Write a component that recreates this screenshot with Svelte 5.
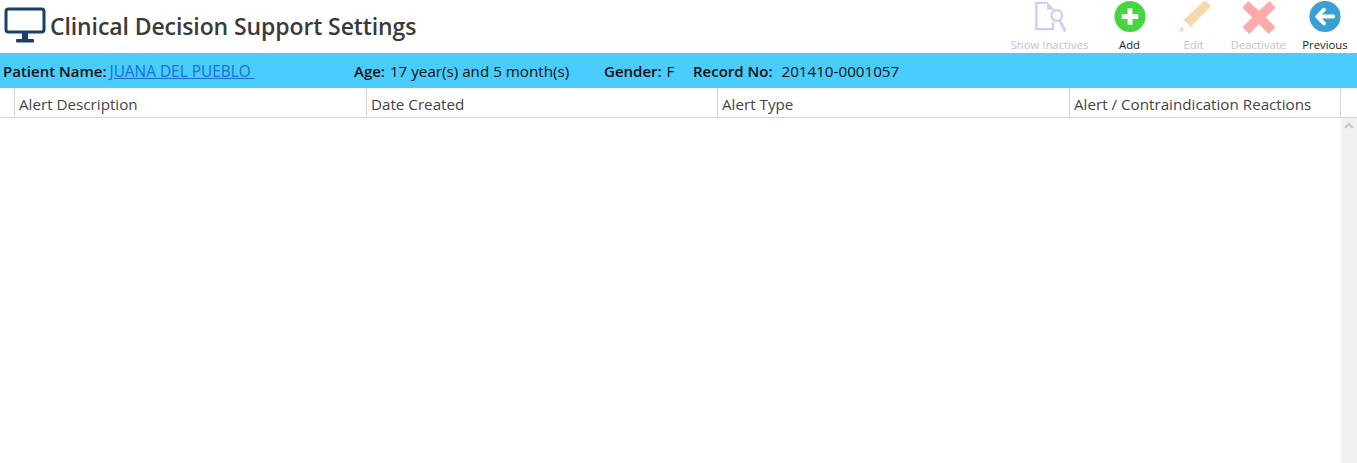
<script>
  const actions = [
    { label: 'Show Inactives', icon: 'search', disabled: true, width: 90 },
    { label: 'Add', icon: 'add', disabled: false, width: 70 },
    { label: 'Edit', icon: 'edit', disabled: true, width: 58 },
    { label: 'Deactivate', icon: 'cross', disabled: true, width: 72 },
    { label: 'Previous', icon: 'back', disabled: false, width: 61 }
  ];

  const columns = ['Alert Description', 'Date Created', 'Alert Type', 'Alert / Contraindication Reactions'];
</script>

<div class="page">
  <header class="topbar">
    <div class="title">
      <svg class="monitor" width="42" height="36" viewBox="0 0 42 36">
        <rect x="2" y="2" width="38" height="23" rx="2.5" fill="none" stroke="#17406d" stroke-width="3" />
        <path d="M18 26h6v6h-6z" fill="#17406d" />
        <rect x="12" y="32" width="18" height="3.500" rx="1" fill="#17406d" />
      </svg>
      <h1>Clinical Decision Support Settings</h1>
    </div>
    <div class="actions">
      {#each actions as action}
        <button class="action" class:disabled={action.disabled} style="width: {action.width}px">
          <svg width="36" height="36" viewBox="0 0 36 36">
            {#if action.icon === 'search'}
              <path d="M15 3H4v27h17v-7" fill="none" stroke="#c9cffb" stroke-width="2.400" />
              <path d="M15 2l8 8h-8z" fill="#c9cffb" />
              <circle cx="25" cy="16" r="5.500" fill="none" stroke="#c9cffb" stroke-width="2.400" />
              <path d="M28 21l5 10" stroke="#c9cffb" stroke-width="3" stroke-linecap="round" />
            {:else if action.icon === 'add'}
              <circle cx="18" cy="17" r="16" fill="#44d540" />
              <path d="M18 8.500v17M9.500 17h17" stroke="#fff" stroke-width="5" />
            {:else if action.icon === 'edit'}
              <path d="M30 1l5 5c0 1-1 2-1.500 2.500L14 28 3 33l4-12L27 2c1-1 2-1 3-1z" fill="#f3d8ae" />
              <path d="M6.500 21.500c3 0 6.500 3.500 7 7L3 33z" fill="#fff" />
              <path d="M5 27.500l3 3L3 33z" fill="#f3d8ae" />
            {:else if action.icon === 'cross'}
              <path d="M7 1l11 10 11-10 6 7-10 10 10 10-7 7-10-10-10 10-7-7 10-10-10-10z" fill="#ffaaaa" />
            {:else}
              <circle cx="18" cy="17" r="16" fill="#3a9fd2" />
              <path d="M26.500 17H11M17 10l-7 7 7 7" fill="none" stroke="#fff" stroke-width="4" stroke-linecap="round" stroke-linejoin="round" />
            {/if}
          </svg>
          <span>{action.label}</span>
        </button>
      {/each}
    </div>
  </header>

  <div class="patient">
    <div class="field name"><b>Patient Name:</b> <a href="#top">JUANA DEL PUEBLO&nbsp;</a></div>
    <div class="field age"><b>Age:</b> 17 year(s) and 5 month(s)</div>
    <div class="field gender"><b>Gender:</b> F</div>
    <div class="field"><b>Record No:</b>&nbsp; 201410-0001057</div>
  </div>

  <div class="thead">
    <div class="first"></div>
    {#each columns as column}
      <div class="th">{column}</div>
    {/each}
    <div class="last"></div>
  </div>

  <div class="tbody">
    <div class="rows"></div>
    <div class="scrollbar">
      <svg width="16" height="16" viewBox="0 0 16 16">
        <path d="M4 10l4-4 4 4" fill="none" stroke="#c4c4c4" stroke-width="2" />
      </svg>
    </div>
  </div>
</div>

<style>
  :global(body) {
    margin: 0;
    background: #fff;
    overflow: hidden;
  }
  .page {
    display: flex;
    flex-direction: column;
    height: 463px;
    font-family: "Open Sans", "Noto Sans", sans-serif;
    color: #222;
  }
  .topbar {
    display: flex;
    justify-content: space-between;
    height: 53px;
  }
  .title {
    display: flex;
    align-items: flex-start;
    padding: 7px 0 0 4px;
    gap: 4px;
  }
  .monitor {
    flex: none;
  }
  h1 {
    margin: 4px 0 0;
    font-size: 23px;
    line-height: 30px;
    font-weight: 600;
    color: #3a3a3a;
    letter-spacing: -0.1px;
  }
  .actions {
    display: flex;
    padding-right: 1.5px;
  }
  .action {
    display: flex;
    flex-direction: column;
    align-items: center;
    padding: 0;
    border: none;
    background: none;
    font: inherit;
    font-size: 11.3px;
    color: #222;
    line-height: 15px;
    white-space: nowrap;
  }
  .action svg {
    display: block;
    height: 35px;
    margin-bottom: 2px;
  }
  .action.disabled {
    color: #c4c4c4;
  }
  .patient {
    display: flex;
    align-items: center;
    height: 35px;
    padding: 1px 0 0 3px;
    box-sizing: border-box;
    background: #4accff;
    font-size: 15.2px;
    color: #111;
  }
  .field b {
    margin-right: 1px;
    font-weight: 600;
    font-size: 15px;
  }
  .name b {
    margin-right: -1px;
  }
  .field a {
    font-size: 15.4px;
    color: #1a6fd0;
  }
  .name {
    width: 351px;
  }
  .age {
    width: 250px;
  }
  .gender {
    width: 89px;
  }
  .thead {
    display: grid;
    grid-template-columns: 15px 352px 351px 352px 271px 1fr;
    height: 30px;
    box-sizing: border-box;
    border-bottom: 1px solid #d6d6d6;
    font-size: 15.2px;
    color: #444;
  }
  .thead > div {
    display: flex;
    align-items: center;
    padding-top: 2px;
    border-right: 1px solid #d6d6d6;
    white-space: nowrap;
  }
  .thead > .last {
    border-right: none;
  }
  .th {
    padding-left: 4px;
  }
  .tbody {
    display: flex;
    flex: 1;
  }
  .rows {
    flex: 1;
  }
  .scrollbar {
    width: 16px;
    background: #f0f0f0;
  }
  .scrollbar svg {
    display: block;
  }
</style>
